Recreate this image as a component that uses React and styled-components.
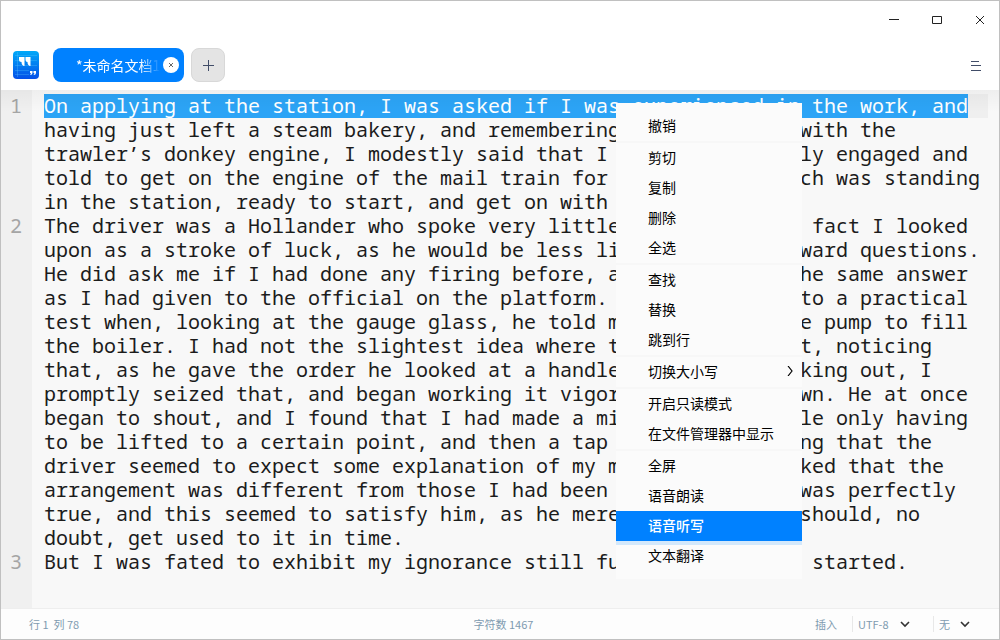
import React from "react";
import styled, { createGlobalStyle } from "styled-components";

const GlobalStyle = createGlobalStyle`
  *, *::before, *::after { box-sizing: border-box; }
  body { margin: 0; font-family: "Noto Sans CJK SC", "Noto Sans", sans-serif; }
  button, select { font-family: inherit; border: 0; padding: 0; background: none; }
`;

const Window = styled.div`
  position: relative;
  display: flex;
  flex-direction: column;
  min-height: 100vh;
  border: 1px solid #c0c0c0;
  background: #fff;
`;

const TitleBar = styled.header`
  display: flex;
  justify-content: flex-end;
  gap: 5px;
  height: 38px;
  margin-bottom: 1px;
`;

const WindowButton = styled.button`
  display: grid;
  place-items: center;
  width: 38px;
  color: #222;
  svg { display: block; }
`;

const TabBar = styled.nav`
  display: flex;
  align-items: center;
  height: 50px;
  padding: 0 11px 0 12px;
`;

const Logo = styled.svg`
  display: block;
  flex: none;
  margin-right: 14px;
`;

const Tab = styled.div`
  display: flex;
  align-items: center;
  width: 131px;
  height: 34px;
  padding: 0 5px 0 23px;
  border-radius: 8px;
  background: #0081ff;
  color: #fff;
`;

const TabTitle = styled.span`
  flex: 1;
  overflow: hidden;
  white-space: nowrap;
  font-size: 14px;
  line-height: 20px;
  mask-image: linear-gradient(to right, #000 64px, transparent 84px);
`;

const CloseTab = styled.button`
  display: grid;
  place-items: center;
  width: 16px;
  height: 16px;
  border-radius: 50%;
  background: #fff;
  color: #666;
`;

const AddTab = styled.button`
  display: grid;
  place-items: center;
  width: 34px;
  height: 34px;
  margin-left: 7px;
  border: 1px solid #d8d8d8;
  border-radius: 8px;
  background: #e4e4e4;
  color: #414d68;
`;

const MenuButton = styled.button`
  display: grid;
  place-items: center;
  width: 24px;
  height: 24px;
  margin-left: auto;
  color: #414d68;
`;

const Editor = styled.main`
  position: relative;
  display: flex;
  flex: 1;
  flex-direction: column;
  overflow: hidden;
  background: #f8f8f8;
  color: #1c1c1c;
  font-family: "Noto Sans Mono", "DejaVu Sans Mono", monospace;
  font-size: 20px;
  line-height: 24px;

  &::before {
    content: "";
    position: absolute;
    inset: 0 0 auto;
    height: 22px;
    background: linear-gradient(rgba(0, 0, 0, 0.04), transparent);
  }
`;

const Paragraph = styled.div`
  display: flex;
  flex: ${(p) => (p.$last ? 1 : "none")};
`;

const LineNumber = styled.div`
  flex: none;
  width: 31px;
  padding: ${(p) => (p.$first ? "4px" : 0)} 10px 0 0;
  background: #f0f0f0;
  color: #a5a5a5;
  text-align: right;
`;

const Text = styled.div`
  flex: 1;
  padding: ${(p) => (p.$first ? "4px" : 0)} 11px 0 12px;
  white-space: pre;
`;

const CurrentLine = styled.div`
  height: 24px;
  background: #efefef;
`;

const Selection = styled.mark`
  display: inline-block;
  height: 24px;
  background: #2ca4f6;
  color: #fff;
`;

const ContextMenu = styled.menu`
  position: absolute;
  top: 102px;
  left: 615px;
  width: 186px;
  margin: 0;
  padding: 8px 0;
  background: #fbfbfb;
  list-style: none;
`;

const MenuItem = styled.li`
  border-top: ${(p) => (p.$divided ? "2px solid #f7f7f7" : 0)};
`;

const MenuAction = styled.button`
  position: relative;
  display: flex;
  align-items: center;
  justify-content: space-between;
  width: 100%;
  height: 30px;
  padding: 0 7px 3px 32px;
  background: ${(p) => (p.$active ? "#0081ff" : "transparent")};
  box-shadow: ${(p) => (p.$active ? "0 4px 0 #d3e8fb" : "none")};
  color: ${(p) => (p.$active ? "#fff" : "#000")};
  font-size: 14px;
  font-weight: ${(p) => (p.$active ? 500 : 400)};
  line-height: 20px;
`;

const StatusBar = styled.footer`
  display: grid;
  grid-template-columns: 1fr auto 1fr;
  align-items: center;
  height: 31px;
  padding: 0 21px 0 28px;
  border-top: 1px solid #eee;
  background: #fdfdfd;
  color: #7f9bb0;
  font-size: 11px;
  line-height: 16px;
  white-space: pre;
`;

const StatusGroup = styled.div`
  display: flex;
  justify-content: flex-end;
  align-items: center;
`;

const Picker = styled.label`
  display: flex;
  align-items: center;
  width: ${(p) => p.$width};
  margin-left: 15px;
  padding: 0 8px 0 5px;
  border-left: 1px solid #e8e8e8;
  color: #333;
`;

const Select = styled.select`
  flex: 1;
  min-width: 0;
  appearance: none;
  color: #7f9bb0;
  font-size: 11px;
  line-height: 16px;
`;

const paragraphs = [
  {
    selected: "On applying at the station, I was asked if I was experienced in the work, and",
    text: `having just left a steam bakery, and remembering my experience with the
trawler’s donkey engine, I modestly said that I did, was promptly engaged and
told to get on the engine of the mail train for Cape Colony which was standing
in the station, ready to start, and get on with the job.`,
  },
  {
    text: `The driver was a Hollander who spoke very little English, which fact I looked
upon as a stroke of luck, as he would be less likely to ask awkward questions.
He did ask me if I had done any firing before, and I gave him the same answer
as I had given to the official on the platform. I was then put to a practical
test when, looking at the gauge glass, he told me to turn on the pump to fill
the boiler. I had not the slightest idea where the pump was, but, noticing
that, as he gave the order he looked at a handle which was sticking out, I
promptly seized that, and began working it vigorously up and down. He at once
began to shout, and I found that I had made a mistake, the handle only having
to be lifted to a certain point, and then a tap turned on. Seeing that the
driver seemed to expect some explanation of my mistake, I remarked that the
arrangement was different from those I had been used to, which was perfectly
true, and this seemed to satisfy him, as he merely said that I should, no
doubt, get used to it in time.`,
  },
  { text: "But I was fated to exhibit my ignorance still further before we started." },
];

const menuGroups = [
  ["撤销"],
  ["剪切", "复制", "删除", "全选"],
  ["查找", "替换", "跳到行"],
  ["切换大小写"],
  ["开启只读模式", "在文件管理器中显示"],
  ["全屏", "语音朗读", "语音听写", "文本翻译"],
];

const Icon = ({ size, d, width = 1 }) => (
  <svg width={size} height={size} viewBox={`0 0 ${size} ${size}`} fill="none" stroke="currentColor" strokeWidth={width} aria-hidden="true">
    <path d={d} />
  </svg>
);

const Chevron = () => <Icon size={10} d="M1 3l4 4 4-4" width={1.6} />;

const AppLogo = () => (
  <Logo width="26" height="28" viewBox="0 0 26 28" aria-hidden="true">
    <defs>
      <linearGradient id="logoFill" x1="0" y1="0" x2="0" y2="1">
        <stop offset="0" stopColor="#00a9f8" />
        <stop offset="1" stopColor="#0550e8" />
      </linearGradient>
    </defs>
    <rect width="26" height="28" rx="4" fill="url(#logoFill)" />
    <path d="M2 4.500h22M2 9.500h22M2 14.500h22M2 19.500h14M2 23.500h14M4.500 1v25" stroke="#62cbff" strokeOpacity=".28" fill="none" />
    <path d="M6 6h5.500v9q-3-.3-3-4Q6 11 6 8.500zM12.500 6h5v9q-3-.3-3-4-2 0-2-2.500z" fill="#fff" />
    <path d="M17 20h2.500v2q0 2-2.500 2l1-2h-1zM20.500 20h2.500v2q0 2-2.500 2l1-2h-1z" fill="#fff" />
  </Logo>
);

export default function App() {
  return (
    <>
      <GlobalStyle />
      <Window>
        <TitleBar>
          <WindowButton aria-label="最小化"><Icon size={12} d="M1 5.500h10" /></WindowButton>
          <WindowButton aria-label="最大化"><Icon size={12} d="M1.500 2.500h9v7h-9z" /></WindowButton>
          <WindowButton aria-label="关闭"><Icon size={12} d="M2 2l8 8M10 2l-8 8" /></WindowButton>
        </TitleBar>
        <TabBar>
          <AppLogo />
          <Tab>
            <TabTitle>*未命名文档1</TabTitle>
            <CloseTab aria-label="关闭标签页"><Icon size={6} d="M1 1l4 4M5 1l-4 4" /></CloseTab>
          </Tab>
          <AddTab aria-label="新建标签页"><Icon size={12} d="M6.500 1v11M1 6.500h11" /></AddTab>
          <MenuButton aria-label="主菜单"><Icon size={12} d="M1 2.500h8M1 6.500h10M1 11.500h10" /></MenuButton>
        </TabBar>
        <Editor>
          {paragraphs.map((p, i) => (
            <Paragraph key={i} $last={i === paragraphs.length - 1}>
              <LineNumber $first={i === 0}>{i + 1}</LineNumber>
              <Text $first={i === 0}>
                {p.selected && <CurrentLine><Selection>{p.selected}</Selection></CurrentLine>}
                {p.text}
              </Text>
            </Paragraph>
          ))}
        </Editor>
        <StatusBar>
          <span>行 1  列 78</span>
          <span>字符数 1467</span>
          <StatusGroup>
            <span>插入</span>
            <Picker $width="66px">
              <Select aria-label="编码"><option>UTF-8</option></Select>
              <Chevron />
            </Picker>
            <Picker $width="45px">
              <Select aria-label="语法高亮"><option>无</option></Select>
              <Chevron />
            </Picker>
          </StatusGroup>
        </StatusBar>
        <ContextMenu>
          {menuGroups.map((group, g) =>
            group.map((label, i) => (
              <MenuItem key={label} $divided={g > 0 && i === 0}>
                <MenuAction $active={label === "语音听写"}>
                  {label}
                  {label === "切换大小写" && <Icon size={10} d="M3 0l4 5-4 5" width={1.2} />}
                </MenuAction>
              </MenuItem>
            ))
          )}
        </ContextMenu>
      </Window>
    </>
  );
}
